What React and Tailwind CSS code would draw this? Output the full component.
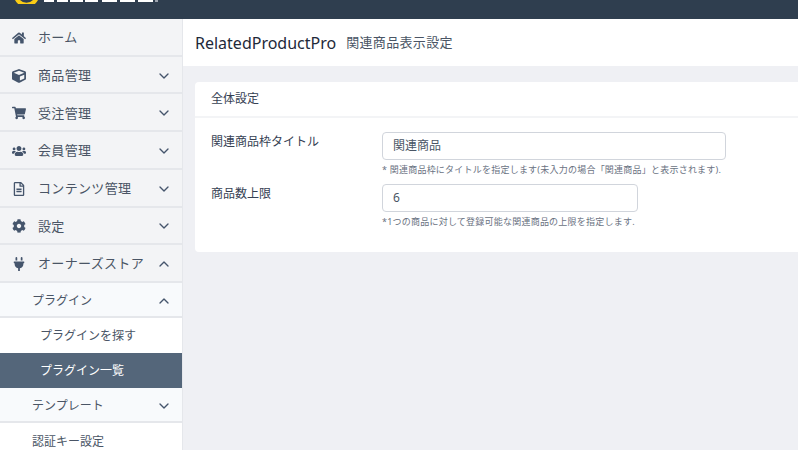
import { FaHome, FaCube, FaShoppingCart, FaUsers, FaRegFileAlt, FaCog, FaPlug } from 'react-icons/fa';
import { ChevronDown, ChevronUp } from 'lucide-react';

const menu = [
  { label: 'ホーム', icon: FaHome },
  { label: '商品管理', icon: FaCube, arrow: 'down' },
  { label: '受注管理', icon: FaShoppingCart, arrow: 'down' },
  { label: '会員管理', icon: FaUsers, arrow: 'down' },
  { label: 'コンテンツ管理', icon: FaRegFileAlt, arrow: 'down' },
  { label: '設定', icon: FaCog, arrow: 'down' },
  { label: 'オーナーズストア', icon: FaPlug, arrow: 'up' },
];

const logoBlocks = [
  [44, 10], [57, 11], [70, 13], [85, 13], [102, 15], [120, 15], [138, 15],
];

function Arrow({ dir }) {
  const Icon = dir === 'up' ? ChevronUp : ChevronDown;
  return <Icon className="w-4 h-4 text-slate-600" strokeWidth={2} />;
}

// only the bottom edge of the logo shows above the fold
function Logo() {
  return (
    <svg width="170" height="4" viewBox="0 0 170 4" className="block">
      <path d="M15 0 A13 13 0 0 0 38 0 L33 0 A9 9 0 0 1 20 0 Z" fill="#facc15" />
      {logoBlocks.map(([x, w]) => (
        <rect key={x} x={x} y="0" width={w} height="2" fill="#fff" />
      ))}
      <rect x="155" y="0" width="3" height="2" fill="#9ca3af" />
    </svg>
  );
}

function Sidebar() {
  return (
    <aside className="w-[183px] shrink-0 bg-gray-100 border-r border-gray-200 text-[13px] text-gray-600">
      <div className="grid grid-rows-7 h-[264px]">
        {menu.map((item) => (
          <div key={item.label} className="flex items-center pt-0.5 pl-3 pr-2.5 border-b-2 border-gray-200">
            <item.icon className="w-3.5 h-3.5 text-slate-600 shrink-0" />
            <span className="ml-3 flex-1 whitespace-nowrap tracking-wide">{item.label}</span>
            {item.arrow && <Arrow dir={item.arrow} />}
          </div>
        ))}
      </div>
      <div className="bg-slate-50 text-xs">
        <div className="h-[35px] flex items-center pt-0.5 pl-8 pr-2.5 border-b-2 border-gray-200">
          <span className="flex-1">プラグイン</span>
          <Arrow dir="up" />
        </div>
        <div className="bg-white h-[35px] flex items-center pl-10">プラグインを探す</div>
        <div className="bg-[#54667a] text-white h-[35px] flex items-center pl-10">プラグイン一覧</div>
        <div className="h-[35px] flex items-center pt-0.5 pl-8 pr-2.5 border-b-2 border-gray-200">
          <span className="flex-1">テンプレート</span>
          <Arrow dir="down" />
        </div>
        <div className="bg-white h-9 flex items-center pt-0.5 pl-8">認証キー設定</div>
      </div>
    </aside>
  );
}

function Row({ label, value, help, width }) {
  return (
    <div className="flex">
      <div className="w-[171px] pt-0.5 text-xs text-gray-700 shrink-0">{label}</div>
      <div>
        <div className={`${width} h-7 flex items-center px-2.5 border border-gray-300 rounded text-xs text-gray-600`}>{value}</div>
        <p className="mt-1 text-[9px] leading-3 tracking-wide text-gray-500 whitespace-nowrap">{help}</p>
      </div>
    </div>
  );
}

export default function App() {
  return (
    <div className="h-[450px] w-[798px] overflow-hidden flex flex-col bg-[#eff0f4]" style={{ fontFamily: '"Noto Sans", "Noto Sans CJK JP", sans-serif' }}>
      <header className="h-[19px] shrink-0 bg-[#2f3e4f] overflow-hidden">
        <Logo />
      </header>
      <div className="flex flex-1 min-h-0">
        <Sidebar />
        <main className="flex-1 min-w-0">
          <div className="h-[47px] bg-white flex items-center pl-3 gap-2.5">
            <h1 className="text-base text-gray-800">RelatedProductPro</h1>
            <span className="text-[13px] tracking-wide text-gray-600">関連商品表示設定</span>
          </div>
          <section className="mt-4 ml-3 bg-white rounded-l">
            <div className="h-9 flex items-center px-4 text-xs text-gray-700 border-b-2 border-gray-100">全体設定</div>
            <div className="px-4 pt-3.5 pb-6 flex flex-col gap-2">
              <Row label="関連商品枠タイトル" value="関連商品" width="w-[344px]" help="* 関連商品枠にタイトルを指定します(未入力の場合「関連商品」と表示されます)." />
              <Row label="商品数上限" value="6" width="w-64" help="*1つの商品に対して登録可能な関連商品の上限を指定します." />
            </div>
          </section>
        </main>
      </div>
    </div>
  );
}
